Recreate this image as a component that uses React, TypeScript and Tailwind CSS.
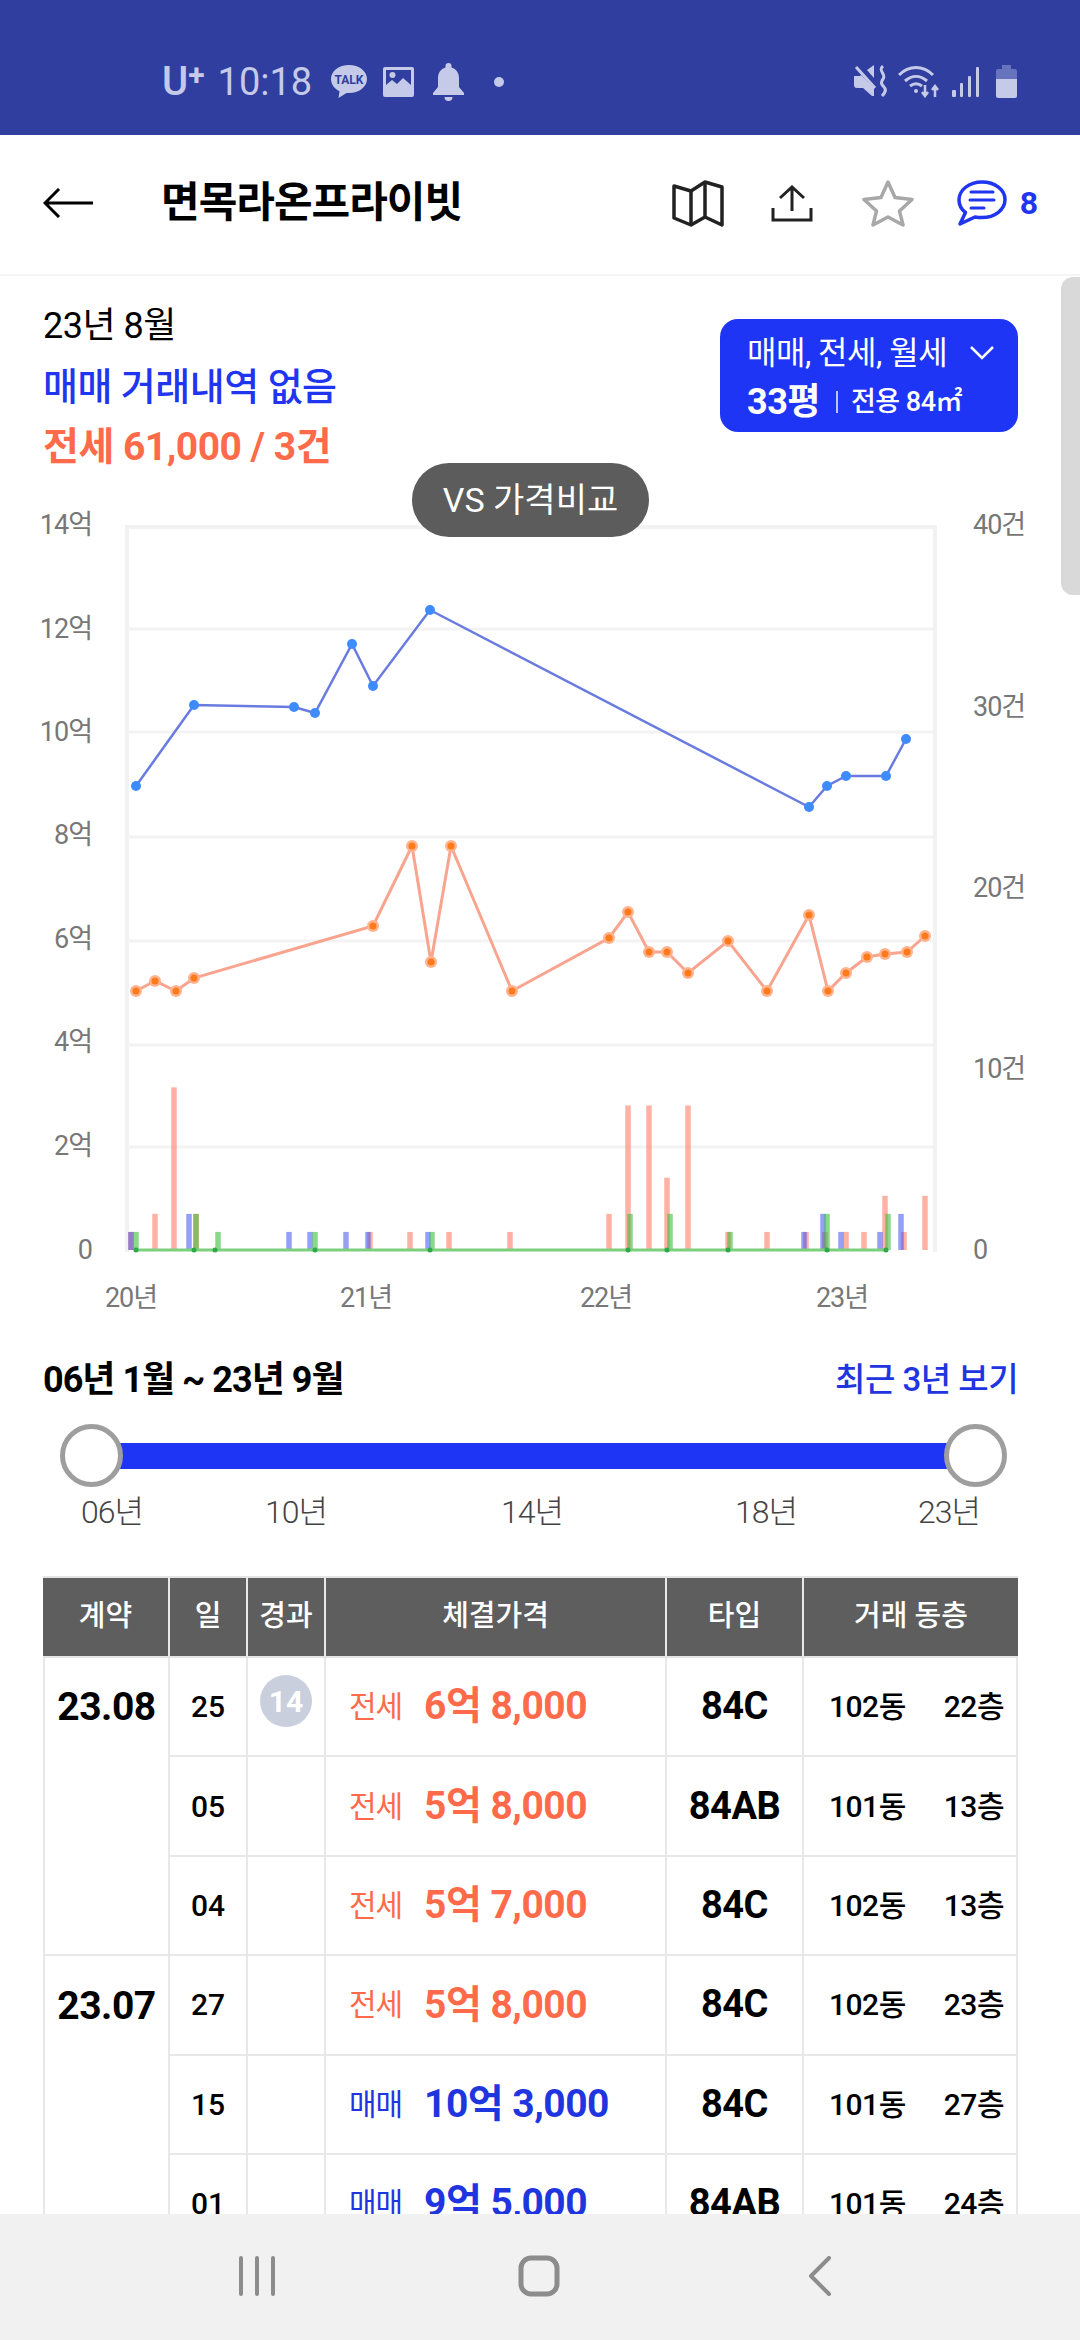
import React from 'react';

const bluePoints = [[136, 786], [194, 705], [294, 707], [315, 713], [352, 644], [373, 686], [430, 610], [809, 807], [827, 786], [846, 776], [886, 776], [906, 739]];
const orangePoints = [[136, 991], [155, 981], [176, 991], [194, 978], [373, 926], [412, 846], [431, 962], [451, 846], [512, 991], [609, 938], [628, 912], [649, 952], [667, 952], [688, 973], [728, 941], [767, 991], [809, 915], [828, 991], [846, 973], [867, 957], [885, 954], [907, 952], [925, 936]];
const greenDots = [136, 194, 215, 315, 430, 628, 667, 728, 827, 886];

const pinkBars = [[131, 1], [155, 2], [174, 9], [196, 2], [370, 1], [410, 1], [449, 1], [510, 1], [609, 2], [628, 8], [649, 8], [667, 4], [688, 8], [728, 1], [767, 1], [806, 1], [825, 1], [846, 1], [864, 1], [885, 3], [904, 1], [925, 3]];
const blueBars = [[131, 1], [189, 2], [289, 1], [310, 1], [346, 1], [368, 1], [428, 1], [804, 1], [823, 2], [841, 1], [880, 1], [901, 2]];
const greenBars = [[136, 1], [196, 2], [218, 1], [315, 1], [432, 1], [630, 2], [670, 2], [730, 1], [827, 2], [888, 2]];

const gridLines = [629, 732, 837, 941, 1045, 1147];
const leftLabels: [string, number][] = [['14억', 525], ['12억', 629], ['10억', 732], ['8억', 835], ['6억', 939], ['4억', 1042], ['2억', 1146], ['0', 1250]];
const rightLabels: [string, number][] = [['40건', 525], ['30건', 707], ['20건', 888], ['10건', 1069], ['0', 1250]];
const xLabels: [string, number][] = [['20년', 131], ['21년', 366], ['22년', 606], ['23년', 842]];

type Deal = { day: string; kind: '전세' | '매매'; price: string; type: string; dong: string; floor: string };

const groups: { month: string; deals: Deal[] }[] = [
  {
    month: '23.08',
    deals: [
      { day: '25', kind: '전세', price: '6억 8,000', type: '84C', dong: '102동', floor: '22층' },
      { day: '05', kind: '전세', price: '5억 8,000', type: '84AB', dong: '101동', floor: '13층' },
      { day: '04', kind: '전세', price: '5억 7,000', type: '84C', dong: '102동', floor: '13층' },
    ],
  },
  {
    month: '23.07',
    deals: [
      { day: '27', kind: '전세', price: '5억 8,000', type: '84C', dong: '102동', floor: '23층' },
      { day: '15', kind: '매매', price: '10억 3,000', type: '84C', dong: '101동', floor: '27층' },
      { day: '01', kind: '매매', price: '9억 5,000', type: '84AB', dong: '101동', floor: '24층' },
    ],
  },
];

const toPath = (pts: number[][]) => pts.map((p) => p.join(',')).join(' ');

const StatusLeft = () => (
  <div className="flex items-center h-full pl-[162px] text-[#c5cae9]">
    <span className="text-[40px] leading-none font-medium">U</span>
    <span className="text-[30px] leading-none font-bold -mt-[14px]">+</span>
    <span className="text-[38px] leading-none ml-[13px]">10:18</span>
    <svg className="ml-[19px]" width="36" height="33" viewBox="0 0 36 33">
      <path d="M18 0C8 0 0 6 0 14c0 5.300 3.500 9.800 8.500 12.200L7.500 33l8-5.100c.8.100 1.700.100 2.500.100 10 0 18-6.200 18-14S28 0 18 0z" fill="#c5cae9" />
      <text x="18" y="19" textAnchor="middle" fontSize="12" fontWeight="700" fill="#303f9f">TALK</text>
    </svg>
    <svg className="ml-[16px]" width="31" height="30" viewBox="0 0 31 30">
      <path fillRule="evenodd" d="M2 0h27a2 2 0 0 1 2 2v26a2 2 0 0 1-2 2H2a2 2 0 0 1-2-2V2a2 2 0 0 1 2-2zm1 3v15l6-5 5 4 6-6 8 7V3H3z" fill="#c5cae9" />
      <circle cx="9.500" cy="8" r="3" fill="#c5cae9" />
    </svg>
    <svg className="ml-[19px]" width="31" height="38" viewBox="0 0 31 38">
      <path d="M15.500 0a3 3 0 0 1 3 3v1.500C23.500 6 26 10 26 15v9l5 6v2H0v-2l5-6v-9C5 10 7.500 6 12.500 4.500V3a3 3 0 0 1 3-3zM11.500 34h8a4 4 0 0 1-8 0z" fill="#c5cae9" />
    </svg>
    <span className="ml-[30px] w-[10px] h-[10px] rounded-full bg-[#c5cae9]" />
  </div>
);

const StatusRight = () => (
  <div className="flex items-center h-full pr-[63px] text-[#c5cae9]">
    <svg width="33" height="33" viewBox="0 0 33 33" fill="none">
      <path d="M0 11h6l1-1 13 13v8h-2l-9-8H3a3 3 0 0 1-3-3zM13 5l7-5v13z" fill="currentColor" />
      <path d="M1 1l21 23" stroke="#303f9f" strokeWidth="2" />
      <path d="M2 2l19 21" stroke="currentColor" strokeWidth="3" />
      <path d="M29 1c-6 5 4 8 0 13-3 4 -1 6 1 8 3 3 1 6-2 9" stroke="currentColor" strokeWidth="3" />
    </svg>
    <svg className="ml-[11px]" width="42" height="33" viewBox="0 0 42 33" fill="none" stroke="currentColor" strokeWidth="3">
      <path d="M1 10C11 0 25 0 35 10" />
      <path d="M7 16c7-6 15-6 22 0" />
      <path d="M12 21c4-3 8-3 12 0" />
      <circle cx="18" cy="26" r="2" fill="currentColor" stroke="none" />
      <path d="M27 20v11M24 27l3 4 3-4M37 32V21M34 25l3-4 3 4" strokeWidth="2.500" />
    </svg>
    <svg className="ml-[12px]" width="28" height="30" viewBox="0 0 28 30" fill="currentColor">
      <rect x="0" y="23" width="4" height="7" rx="1" />
      <rect x="8" y="16" width="3" height="14" rx="1" />
      <rect x="16" y="9" width="3" height="21" rx="1" />
      <rect x="24" y="0" width="3" height="30" rx="1" />
    </svg>
    <svg className="ml-[16px]" width="21" height="33" viewBox="0 0 21 33">
      <path d="M6 0h9v4h4a2 2 0 0 1 2 2v8H0V6a2 2 0 0 1 2-2h4z" fill="#6773bd" />
      <path d="M0 14h21v17a2 2 0 0 1-2 2H2a2 2 0 0 1-2-2z" fill="#c5cae9" />
    </svg>
  </div>
);

const AppHeader = () => (
  <header className="h-[141px] shrink-0 flex items-center bg-white border-b-2 border-[#f5f5f5] relative">
    <svg className="ml-[43px] -mt-[3px]" width="50" height="30" viewBox="0 0 50 30" fill="none" stroke="#000" strokeWidth="3">
      <path d="M50 15H2M16 1L2 15l14 14" />
    </svg>
    <h1 className="ml-[68px] -mt-[3px] text-[42px] leading-none font-bold tracking-[-1px] text-black">면목라온프라이빗</h1>
    <div className="ml-auto mr-[42px] -mt-[3px] flex items-center">
      <svg width="52" height="47" viewBox="0 0 52 47" fill="none" stroke="#222" strokeWidth="3.500" strokeLinejoin="round">
        <path d="M2 6l17 5 14-9 17 5v38l-17-8-14 8-17-7z" />
        <path d="M19 11v34M33 2v35" />
      </svg>
      <svg className="ml-[47.5px]" width="42" height="37" viewBox="0 0 42 37" fill="none" stroke="#222" strokeWidth="3">
        <path d="M21 26V2M9 13L21 2l12 11" />
        <path d="M2 23v12h38V23" />
      </svg>
      <svg className="ml-[49px]" width="52" height="48" viewBox="0 0 52 48" fill="none" stroke="#a8a8a8" strokeWidth="3.500" strokeLinejoin="round">
        <path d="M26 3l7 15.500 17 2-12.500 11.500L41 46 26 38l-15 8 3.500-14L2 20.500l17-2z" />
      </svg>
      <svg className="ml-[42.5px]" width="50" height="46" viewBox="0 0 50 46" fill="none" stroke="#1f35f0" strokeWidth="3.500" strokeLinecap="round">
        <path d="M25 2C12 2 2 10 2 20c0 5 2.500 9.500 6.500 12.500L3 44l15-7c2 .4 4.500.6 7 .6 13 0 23-8 23-18S38 2 25 2z" strokeLinejoin="round" />
        <path d="M14 12h22M13 20h24M14 28h13" strokeWidth="3" />
      </svg>
      <span className="ml-[13px] text-[32px] leading-none font-bold text-[#1f35f0]">8</span>
    </div>
  </header>
);

const SummaryBlock = () => (
  <div className="h-[224px] pl-[43px] pr-[62px] flex justify-between relative">
    <div className="pt-[29px]">
      <p className="text-[36px] leading-[42px] text-black tracking-[-0.5px]">23년 8월</p>
      <p className="mt-[19px] text-[38px] leading-[42px] font-medium text-[#1f35f0] tracking-[-0.5px]">매매 거래내역 없음</p>
      <p className="mt-[18px] text-[39px] leading-[42px] font-bold text-[#ff6b4a] tracking-[-0.5px]">전세 61,000 / 3건</p>
    </div>
    <div className="mt-[43px] w-[298px] h-[113px] rounded-[18px] bg-[#1f35f5] text-white pl-[27px] pr-[24px] pt-[12px]">
      <div className="flex items-center justify-between">
        <span className="text-[32px] leading-[44px] tracking-[-0.5px]">매매, 전세, 월세</span>
        <svg width="24" height="14" viewBox="0 0 24 14" fill="none" stroke="#fff" strokeWidth="2.500">
          <path d="M1 1l11 11L23 1" />
        </svg>
      </div>
      <div className="flex items-center mt-[5px]">
        <span className="text-[36px] leading-[44px] font-bold tracking-[-0.5px]">33평</span>
        <span className="ml-[16px] w-[2px] h-[22px] bg-white opacity-70" />
        <span className="ml-[13px] text-[27px] leading-[44px] font-medium tracking-[-0.5px]">전용 84㎡</span>
      </div>
    </div>
    <div className="absolute left-[412px] top-[187px] z-10 w-[237px] h-[74px] rounded-full bg-[#5c5c5c] flex items-center justify-center text-white text-[34px]">
      VS 가격비교
    </div>
  </div>
);

const PriceChart = () => (
  <svg className="block" width="1080" height="840" viewBox="0 500 1080 840">
    <path d="M127 1252V527H935V1252" fill="none" stroke="#f2f2f2" strokeWidth="4" />
    {gridLines.map((y) => (
      <line key={y} x1="127" x2="935" y1={y} y2={y} stroke="#f3f3f3" strokeWidth="3" />
    ))}
    {pinkBars.map(([x, n]) => (
      <rect key={x} x={x - 2.75} y={1250 - n * 18.07} width="5.500" height={n * 18.07} fill="#ff6347" fillOpacity="0.5" />
    ))}
    {blueBars.map(([x, n]) => (
      <rect key={x} x={x - 2.75} y={1250 - n * 18.07} width="5.500" height={n * 18.07} fill="#3c50f0" fillOpacity="0.55" />
    ))}
    {greenBars.map(([x, n]) => (
      <rect key={x} x={x - 2.75} y={1250 - n * 18.07} width="5.500" height={n * 18.07} fill="#3cbe3c" fillOpacity="0.6" />
    ))}
    <line x1="136" x2="888" y1="1250" y2="1250" stroke="#7ccf7c" strokeWidth="3" />
    {greenDots.map((x) => (
      <circle key={x} cx={x} cy="1250" r="2.500" fill="#2fa84a" />
    ))}
    <polyline points={toPath(bluePoints)} fill="none" stroke="#6a7be0" strokeWidth="2.500" />
    {bluePoints.map(([x, y]) => (
      <circle key={x} cx={x} cy={y} r="5" fill="#3d8bfd" />
    ))}
    <polyline points={toPath(orangePoints)} fill="none" stroke="#f9a48f" strokeWidth="3" />
    {orangePoints.map(([x, y]) => (
      <g key={x}>
        <circle cx={x} cy={y} r="6" fill="#ffb38f" />
        <circle cx={x} cy={y} r="3.500" fill="#ff7a1a" />
      </g>
    ))}
    <g fill="#777" fontSize="27">
      {leftLabels.map(([t, y]) => (
        <text key={t} x="92" y={y + 9} textAnchor="end" letterSpacing="-1">{t}</text>
      ))}
      {rightLabels.map(([t, y]) => (
        <text key={t} x="973" y={y + 9} letterSpacing="-1">{t}</text>
      ))}
      {xLabels.map(([t, x]) => (
        <text key={t} x={x} y="1307" textAnchor="middle" letterSpacing="-1">{t}</text>
      ))}
    </g>
  </svg>
);

const RangeBlock = () => (
  <div className="pl-[43px] pr-[62px]">
    <div className="flex items-center justify-between h-[40px] relative top-[20px]">
      <span className="text-[36px] font-bold text-black tracking-[-1px]">06년 1월 ~ 23년 9월</span>
      <span className="text-[33px] font-medium text-[#1f35e0] tracking-[-0.5px]">최근 3년 보기</span>
    </div>
    <div className="mt-[44px] ml-[17px] w-[947px] h-[63px] flex items-center">
      <span className="w-[63px] h-[63px] rounded-full border-[5px] border-[#9e9e9e] bg-white shrink-0 z-10" />
      <span className="flex-1 h-[26px] bg-[#1f35f5] -mx-[4px]" />
      <span className="w-[63px] h-[63px] rounded-full border-[5px] border-[#9e9e9e] bg-white shrink-0 z-10" />
    </div>
    <div className="flex mt-[6px] text-[32px] leading-[38px] font-light text-[#444] tracking-[-1px]">
      <span className="w-[70px] ml-[34px] text-center">06년</span>
      <span className="w-[70px] ml-[114px] text-center">10년</span>
      <span className="w-[70px] ml-[166px] text-center">14년</span>
      <span className="w-[70px] ml-[164px] text-center">18년</span>
      <span className="w-[70px] ml-[113px] text-center">23년</span>
    </div>
  </div>
);

const cols = 'grid grid-cols-[127px_78px_78px_341px_137px_214px]';
const headCell = 'flex items-center justify-center border-r-2 border-[#e8e8e8] last:border-r-0';
const bodyCell = 'flex border-r-2 border-b-2 border-[#e8e8e8]';

const DealTable = () => (
  <div className="ml-[43px] mt-[45px] w-[975px]">
    <div className={`${cols} h-[82px] bg-[#5e5e5e] text-white text-[29px] font-medium border-t-2 border-b-2 border-[#e4e4e4]`}>
      <div className={headCell}>계약</div>
      <div className={headCell}>일</div>
      <div className={headCell}>경과</div>
      <div className={headCell}>체결가격</div>
      <div className={headCell}>타입</div>
      <div className={headCell}>거래 동층</div>
    </div>
    {groups.map((group) =>
      group.deals.map((deal, i) => {
        const color = deal.kind === '전세' ? 'text-[#ff6b4a]' : 'text-[#1f35e0]';
        const last = i === group.deals.length - 1;
        return (
          <div key={group.month + deal.day} className={`${cols} h-[99.4px] text-black`}>
            <div className={`flex items-center justify-center border-r-2 border-l-2 border-[#e8e8e8] ${last ? 'border-b-2' : ''} text-[39px] font-bold tracking-[-0.5px]`}>
              {i === 0 ? group.month : ''}
            </div>
            <div className={`${bodyCell} items-center justify-center text-[30px] font-medium`}>{deal.day}</div>
            <div className={`${bodyCell} items-start justify-center`}>
              {deal.day === '25' && group.month === '23.08' && (
                <span className="mt-[17px] w-[52px] h-[52px] rounded-full bg-[#c9cfdc] text-white text-[30px] font-bold flex items-center justify-center">14</span>
              )}
            </div>
            <div className={`${bodyCell} items-center justify-start pl-[23px]`}>
              <span className={`${color} text-[30px] w-[52px] whitespace-nowrap tracking-[-1px]`}>{deal.kind}</span>
              <span className={`${color} ml-[23px] text-[39px] font-bold tracking-[-0.5px]`}>{deal.price}</span>
            </div>
            <div className={`${bodyCell} items-center justify-center text-[38px] font-bold tracking-[-0.5px]`}>{deal.type}</div>
            <div className={`${bodyCell} items-center justify-between pl-[25px] pr-[12px] text-[30px] font-medium tracking-[-0.5px]`}>
              <span>{deal.dong}</span>
              <span>{deal.floor}</span>
            </div>
          </div>
        );
      })
    )}
  </div>
);

const NavBar = () => (
  <nav className="h-[126px] shrink-0 bg-[#f1f1f1] flex items-center pb-[2px]">
    <svg className="ml-[238px]" width="38" height="40" viewBox="0 0 38 40" fill="none" stroke="#8c8c8c" strokeWidth="4" strokeLinecap="round">
      <path d="M3 2v36M19 2v36M35 2v36" />
    </svg>
    <svg className="ml-[242px]" width="42" height="42" viewBox="0 0 42 42" fill="none" stroke="#8c8c8c" strokeWidth="5">
      <rect x="3" y="3" width="36" height="36" rx="10" />
    </svg>
    <svg className="ml-[248px]" width="24" height="40" viewBox="0 0 24 40" fill="none" stroke="#8c8c8c" strokeWidth="4" strokeLinecap="round" strokeLinejoin="round">
      <path d="M21 2L3 20l18 18" />
    </svg>
  </nav>
);

export default function App() {
  return (
    <div className="w-[1080px] h-[2340px] flex flex-col overflow-hidden bg-white font-['Roboto','Noto_Sans_CJK_KR',sans-serif]">
      <div className="h-[135px] shrink-0 bg-[#303f9f] flex items-center justify-between pt-[28px]">
        <StatusLeft />
        <StatusRight />
      </div>
      <AppHeader />
      <main className="flex-1 relative overflow-hidden">
        <SummaryBlock />
        <PriceChart />
        <RangeBlock />
        <DealTable />
        <div className="absolute top-[1px] right-0 w-[19px] h-[318px] rounded-l-[12px] bg-[#d9d9d9]" />
      </main>
      <NavBar />
    </div>
  );
}
